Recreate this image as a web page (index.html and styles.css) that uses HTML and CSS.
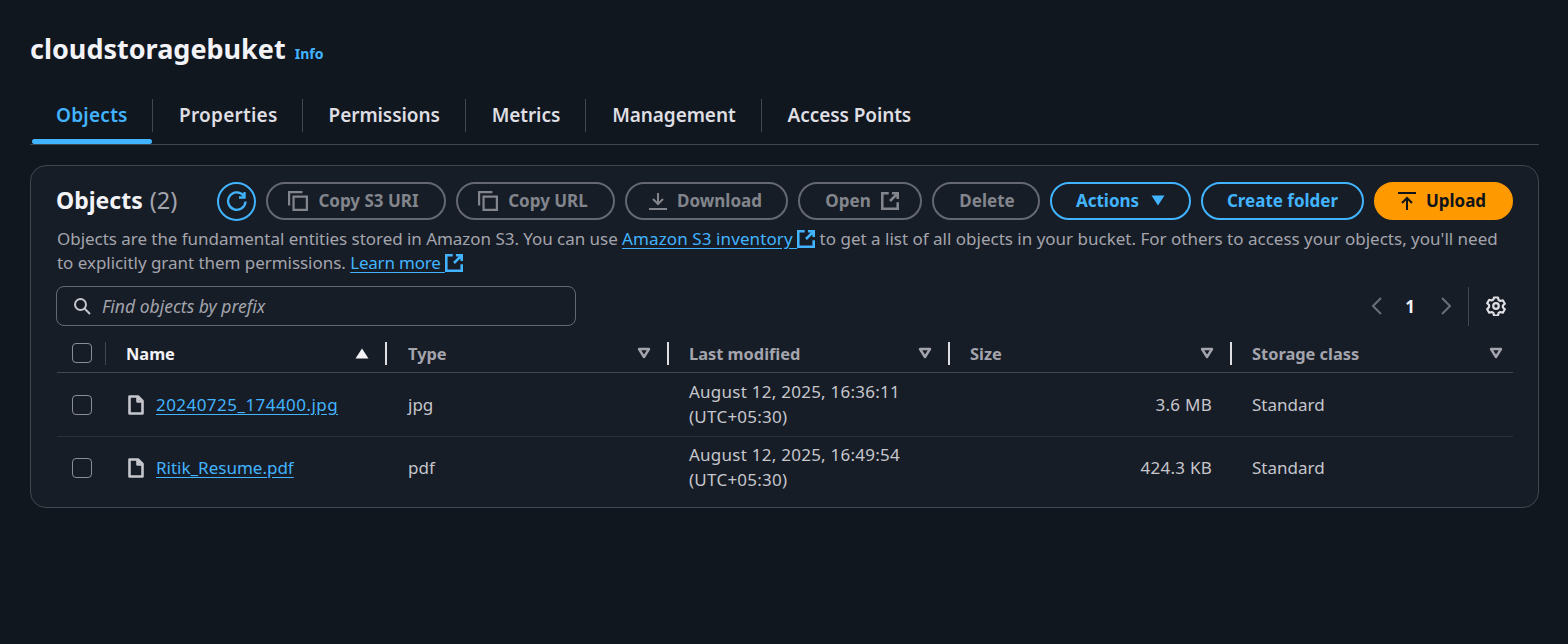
FILE: index.html
```html
<!DOCTYPE html>
<html lang="en">
<head>
    <meta charset="UTF-8">
    <title>cloudstoragebuket - S3 bucket</title>
    <link rel="stylesheet" href="styles.css">
</head>
<body>
    <svg class="icon-defs" width="0" height="0">
        <symbol id="ext" viewBox="1 1 14 14"><path d="M7 2H2v12h12V9M9.500 2H14v4.500M14 2L8 8" fill="none" stroke="currentColor" stroke-width="2"/></symbol>
        <symbol id="copy" viewBox="1 1 18 18"><path d="M2 14V2h12M6 6h12v12H6z" fill="none" stroke="currentColor" stroke-width="2"/></symbol>
        <symbol id="file" viewBox="0 0 16 20"><path d="M1.500 1.500h8.500l4.500 4.500v12.500h-13zM9.500 1.500v5h5" fill="none" stroke="currentColor" stroke-width="2.600" stroke-linejoin="round"/></symbol>
        <symbol id="filter" viewBox="0 0 14 12"><path d="M2 2h10L7 10z" fill="none" stroke="currentColor" stroke-width="2.400" stroke-linejoin="round"/></symbol>
    </svg>

    <h1 class="bucket-title">cloudstoragebuket <a class="info-link" href="#">Info</a></h1>

    <!-- Tabs -->
    <nav class="tabs">
        <a class="tab tab-active" href="#">Objects</a>
        <a class="tab" href="#">Properties</a>
        <a class="tab" href="#">Permissions</a>
        <a class="tab" href="#">Metrics</a>
        <a class="tab" href="#">Management</a>
        <a class="tab tab-last" href="#">Access Points</a>
    </nav>

    <!-- Objects panel -->
    <section class="panel">
        <div class="panel-header">
            <h2 class="panel-title">Objects <span class="count">(2)</span></h2>
            <div class="actions">
                <button class="btn btn-icon">
                    <svg width="22" height="22" viewBox="0 0 22 22"><path d="M19.500 11.500A8.700 8.700 0 1 1 17.500 5.500M18.500 2v5.500H13" fill="none" stroke="currentColor" stroke-width="2.300"/></svg>
                </button>
                <button class="btn btn-off btn-copy-uri"><svg class="ico" width="20" height="20"><use href="#copy"/></svg>Copy S3 URI</button>
                <button class="btn btn-off btn-copy-url"><svg class="ico" width="20" height="20"><use href="#copy"/></svg>Copy URL</button>
                <button class="btn btn-off btn-download">
                    <svg class="ico" width="18" height="18" viewBox="0 0 18 18"><path d="M9 1v11M4 7l5 5 5-5M0 17h18" fill="none" stroke="currentColor" stroke-width="2"/></svg>Download
                </button>
                <button class="btn btn-off btn-open">Open<svg class="ico-after" width="18" height="18"><use href="#ext"/></svg></button>
                <button class="btn btn-off btn-delete">Delete</button>
                <button class="btn btn-actions">Actions<svg class="ico-after" width="14" height="11" viewBox="0 0 14 11"><path d="M0.500 0.500h13L7 10.500z" fill="currentColor"/></svg></button>
                <button class="btn btn-create">Create folder</button>
                <button class="btn btn-upload">
                    <svg class="ico" width="18" height="18" viewBox="0 0 18 18"><path d="M0 1h18M9 18V6M4 11l5-5 5 5" fill="none" stroke="currentColor" stroke-width="2"/></svg>Upload
                </button>
            </div>
        </div>

        <p class="panel-desc">
            <span class="desc-line">Objects are the fundamental entities stored in Amazon S3. You can use
            <a class="link-wide" href="#">Amazon S3 inventory </a><svg class="ext-link" width="18" height="18"><use href="#ext"/></svg>
            <span class="desc-tail">to get a list of all objects in your bucket. For others to access your objects, you'll need</span></span>
            <span class="desc-line">to explicitly grant them permissions.
            <a class="link-tight" href="#">Learn more </a><svg class="ext-link" width="18" height="18"><use href="#ext"/></svg></span>
        </p>

        <div class="toolbar">
            <div class="search">
                <svg width="18" height="18" viewBox="0 0 18 18"><circle cx="7.500" cy="7.500" r="5.500" fill="none" stroke="currentColor" stroke-width="2"/><path d="M11.500 11.500L17 17" stroke="currentColor" stroke-width="2"/></svg>
                <span class="search-hint">Find objects by prefix</span>
            </div>
            <div class="pager">
                <svg class="chev" width="11" height="18" viewBox="0 0 11 18"><path d="M10 1L2 9l8 8" fill="none" stroke="currentColor" stroke-width="2"/></svg>
                <span class="page-no">1</span>
                <svg class="chev" width="11" height="18" viewBox="0 0 11 18"><path d="M1 1l8 8-8 8" fill="none" stroke="currentColor" stroke-width="2"/></svg>
                <span class="pager-sep"></span>
                <svg class="gear" width="20" height="20" viewBox="0 0 20 20"><path d="M8 1.500h4l.6 2.500 1.700 1 2.500-.7 2 3.400-1.900 1.800v2l1.900 1.800-2 3.400-2.500-.7-1.700 1-.6 2.500H8l-.6-2.500-1.700-1-2.500.7-2-3.400L3.100 11V9L1.200 7.200l2-3.400 2.500.7 1.700-1z" fill="none" stroke="currentColor" stroke-width="2.200" stroke-linejoin="round"/><circle cx="10" cy="10" r="2.800" fill="none" stroke="currentColor" stroke-width="2.200"/></svg>
            </div>
        </div>

        <div class="table">
            <div class="row head-row">
                <div class="cell cell-check check-head"><span class="checkbox"></span></div>
                <div class="cell th th-active">Name<svg width="14" height="11" viewBox="0 0 14 11"><path d="M0.500 10.500h13L7 0.500z" fill="currentColor"/></svg></div>
                <div class="cell th">Type<svg class="filter" width="14" height="12"><use href="#filter"/></svg></div>
                <div class="cell th">Last modified<svg class="filter" width="14" height="12"><use href="#filter"/></svg></div>
                <div class="cell th">Size<svg class="filter" width="14" height="12"><use href="#filter"/></svg></div>
                <div class="cell th th-last">Storage class<svg class="filter" width="14" height="12"><use href="#filter"/></svg></div>
            </div>
            <div class="row">
                <div class="cell cell-check"><span class="checkbox"></span></div>
                <div class="cell td-name"><svg class="file" width="16" height="20"><use href="#file"/></svg><a class="name-digits" href="#">20240725_174400.jpg</a></div>
                <div class="cell">jpg</div>
                <div class="cell td-num td-date">August 12, 2025, 16:36:11<br>(UTC+05:30)</div>
                <div class="cell td-num td-size">3.6 MB</div>
                <div class="cell">Standard</div>
            </div>
            <div class="row row-last">
                <div class="cell cell-check"><span class="checkbox"></span></div>
                <div class="cell td-name"><svg class="file" width="16" height="20"><use href="#file"/></svg><a href="#">Ritik_Resume.pdf</a></div>
                <div class="cell">pdf</div>
                <div class="cell td-num td-date">August 12, 2025, 16:49:54<br>(UTC+05:30)</div>
                <div class="cell td-num td-size">424.3 KB</div>
                <div class="cell">Standard</div>
            </div>
        </div>
    </section>
</body>
</html>
```

FILE: styles.css
```css
/* General Styles */
* {
    box-sizing: border-box;
}

body {
    font-family: "Noto Sans", sans-serif;
    margin: 0;
    padding: 30px 29px 0 30px;
    min-height: 100vh;
    background-color: #11171f;
    color: #c6c6cd;
    font-size: 17px;
}

a {
    color: #42b4ff;
    text-underline-offset: 3px;
}

.icon-defs {
    position: absolute;
}

/* Title */
.bucket-title {
    display: flex;
    align-items: baseline;
    gap: 9px;
    margin: 0;
    height: 38px;
    font-size: 27px;
    line-height: 38px;
    font-weight: 700;
    color: #f3f3f7;
}

.info-link {
    font-size: 14px;
    font-weight: 700;
    text-decoration: none;
}

/* Tabs */
.tabs {
    display: flex;
    margin-top: 31px;
    height: 46px;
    border-bottom: 1px solid #424650;
}

.tab {
    position: relative;
    height: 33px;
    padding: 0 25px 0 26px;
    font-size: 19px;
    line-height: 33px;
    font-weight: 600;
    letter-spacing: -0.080px;
    color: #dedee3;
    text-decoration: none;
    border-right: 1px solid #424650;
}

.tab:nth-child(-n+2) {
    letter-spacing: 0.250px;
}

.tab:nth-child(2) {
    padding-right: 24px;
}

.tab-last {
    border-right: none;
}

.tab-active {
    width: 123px;
    color: #42b4ff;
}

.tab-active::after {
    content: "";
    position: absolute;
    left: 2px;
    right: 0;
    top: 40px;
    height: 5px;
    border-radius: 3px;
    background-color: #42b4ff;
}

/* Panel */
.panel {
    margin-top: 20px;
    height: 343px;
    padding: 16px 25px 0 26px;
    background-color: #161d26;
    border: 1px solid #424650;
    border-radius: 16px;
}

.panel-header {
    display: flex;
    align-items: center;
    justify-content: space-between;
    height: 38px;
}

.panel-title {
    margin: 0 0 2px -1px;
    font-size: 23px;
    font-weight: 700;
    color: #f3f3f7;
}

.count {
    margin-left: 1px;
    font-weight: 400;
    font-size: 23.500px;
    color: #a4a4ad;
}

.actions {
    display: flex;
    align-items: flex-start;
    gap: 10px;
}

.btn {
    display: flex;
    align-items: center;
    justify-content: center;
    height: 38px;
    padding: 0;
    font-family: inherit;
    font-size: 17px;
    font-weight: 700;
    background: none;
    border: 2px solid #42b4ff;
    border-radius: 19px;
    color: #42b4ff;
}

.btn-icon {
    width: 39px;
    height: 39px;
    border-radius: 50%;
}

.btn-off {
    border-color: #656871;
    color: #83858c;
}

.btn-copy-uri { width: 180px; padding-right: 5px; }
.btn-copy-url { width: 159px; padding-right: 5px; }
.btn-download { width: 163px; padding-right: 2px; }
.btn-open { width: 124px; padding-left: 4px; }
.btn-delete { width: 108px; padding-left: 2px; }
.btn-actions { width: 141px; }
.btn-create { width: 163px; }

.btn-upload {
    width: 139px;
    padding-right: 3px;
    background-color: #ff9900;
    border-color: #ff9900;
    color: #0f141a;
}

.ico {
    margin-right: 10px;
}

.ico-after {
    margin-left: 12px;
}

.btn-open .ico-after {
    margin-left: 10px;
}

.panel-desc {
    margin: 7px 0 0;
    line-height: 24px;
    letter-spacing: -0.040px;
    color: #a4a4ad;
}

.desc-line {
    display: block;
}

.desc-tail {
    letter-spacing: 0;
}

.link-wide {
    letter-spacing: 0.100px;
}

.link-tight {
    letter-spacing: -0.200px;
}

.ext-link {
    vertical-align: -3px;
    color: #42b4ff;
}

/* Search and pager */
.toolbar {
    display: flex;
    align-items: center;
    justify-content: space-between;
    margin-top: 11px;
    height: 40px;
}

.search {
    display: flex;
    align-items: center;
    gap: 11px;
    width: 520px;
    height: 40px;
    margin-left: -1px;
    padding-left: 16px;
    border: 1px solid #656871;
    border-radius: 8px;
    color: #c6c6cd;
}

.search-hint {
    font-style: italic;
    font-size: 17.500px;
    color: #a4a4ad;
}

.pager {
    display: flex;
    align-items: center;
    padding-right: 7px;
    color: #6c6f78;
}

.page-no {
    margin: 0 26px 0 23px;
    font-weight: 700;
    color: #f3f3f7;
}

.pager-sep {
    width: 1px;
    height: 39px;
    margin: 0 17px 0 16px;
    background-color: #424650;
}

.gear {
    color: #dedee3;
}

/* Objects table */
.table {
    margin-top: 8px;
}

.row {
    display: grid;
    grid-template-columns: 49px 281px 282px 281px 282px 281px;
    align-items: center;
    height: 64px;
    border-bottom: 1px solid #2a313b;
}

.row-last {
    height: 61px;
    border-bottom: none;
}

.head-row {
    height: 39px;
    border-bottom-color: #424650;
}

.cell {
    padding-left: 20px;
    line-height: 25px;
}

.row > :nth-child(3) {
    padding-left: 21px;
}

.cell-check {
    padding-left: 15px;
    display: flex;
}

.check-head {
    height: 23px;
    align-items: center;
    border-right: 1px solid #424650;
}

.checkbox {
    width: 20px;
    height: 20px;
    border: 1px solid #8c8c94;
    border-radius: 4px;
}

.th {
    display: flex;
    align-items: center;
    justify-content: space-between;
    height: 23px;
    padding-right: 16px;
    font-size: 16.400px;
    font-weight: 700;
    color: #a4a4ad;
    border-right: 2px solid #dedee3;
}

.th-last {
    border-right: none;
    padding-right: 10px;
}

.th-active {
    color: #f3f3f7;
}

.filter {
    color: #a4a4ad;
}

.td-name {
    display: flex;
    align-items: center;
}

.file {
    flex-shrink: 0;
    margin-left: 2px;
    margin-right: 12px;
    color: #c6c6cd;
}

.name-digits {
    letter-spacing: 0.450px;
}

.td-num {
    letter-spacing: 0.250px;
}

.td-date {
    padding-bottom: 2px;
}

.td-size {
    text-align: right;
    padding-right: 20px;
}
```
